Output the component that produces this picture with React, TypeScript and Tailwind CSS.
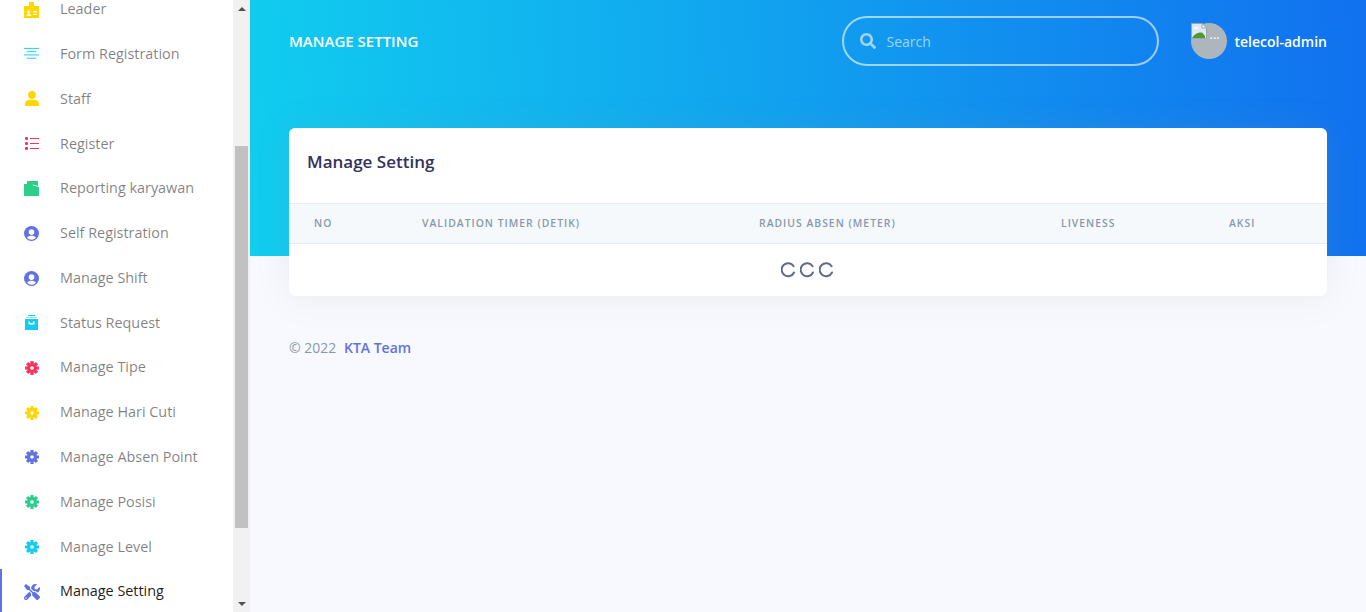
import type { ReactNode } from 'react';
import { FaSearch, FaTools } from 'react-icons/fa';

function GearIcon({ className }: { className: string }) {
  const teeth = [0, 45, 90, 135, 180, 225, 270, 315];
  return (
    <svg viewBox="0 0 14 14" className={`h-[14px] w-[14px] ${className}`} fill="currentColor">
      {teeth.map((deg) => (
        <rect key={deg} x="5.4" y="0" width="3.2" height="3" rx="0.3" transform={`rotate(${deg} 7 7)`} />
      ))}
      <path fillRule="evenodd" d="M7 1.900a5.100 5.100 0 1 0 0 10.200A5.100 5.100 0 0 0 7 1.900Zm0 3.300a1.800 1.800 0 1 1 0 3.600 1.800 1.800 0 0 1 0-3.600Z" />
    </svg>
  );
}

function CircleUserIcon() {
  return (
    <svg viewBox="0 0 16 16" className="h-[15px] w-[15px] text-[#5e72e4]">
      <circle cx="8" cy="8" r="8" fill="currentColor" />
      <circle cx="8" cy="6.5" r="3" fill="#fff" />
      <path d="M3.200 12.600C4.200 10.800 6 10.300 8 10.300s3.800.5 4.800 2.300A6.600 6.600 0 0 1 8 14.600a6.600 6.600 0 0 1-4.800-2Z" fill="#fff" />
    </svg>
  );
}

const menu: { label: string; icon: ReactNode; active?: boolean }[] = [
  {
    label: 'Leader',
    icon: (
      <svg viewBox="0 0 15 16" className="mt-px h-[16px] w-[15px] text-[#ffd600]" fill="currentColor">
        <rect x="5" y="0" width="5" height="5" />
        <path fillRule="evenodd" d="M0 4h15v12H0V4Zm4.800 4.500a1.500 1.500 0 1 0 0 3 1.500 1.500 0 0 0 0-3ZM2.300 14c0-1.200 1.100-2 2.500-2s2.500.8 2.500 2h-5Zm6.700-5h4v1.300H9V9Zm0 2.800h4v1.300H9v-1.300Z" />
      </svg>
    ),
  },
  {
    label: 'Form Registration',
    icon: (
      <svg viewBox="0 0 16 14" className="h-[14px] w-[15px] text-[#11cdef]" fill="currentColor">
        <rect x="0" y="0.500" width="16" height="1" />
        <rect x="3" y="4" width="10" height="1" />
        <rect x="0" y="7.500" width="16" height="1" />
        <rect x="3" y="11" width="10" height="1" />
      </svg>
    ),
  },
  {
    label: 'Staff',
    icon: (
      <svg viewBox="0 0 14 15" className="h-[15px] w-[14px] text-[#ffd600]" fill="currentColor">
        <circle cx="7" cy="4" r="3.900" />
        <path d="M0 15v-2c0-2.600 2.400-4.200 4.500-4.200h5C11.600 8.800 14 10.400 14 13v2H0Z" />
      </svg>
    ),
  },
  {
    label: 'Register',
    icon: (
      <svg viewBox="0 0 14 13" className="h-[13px] w-[14px] text-[#f5365c]" fill="currentColor">
        <rect x="0" y="0" width="3" height="3" rx="1" />
        <rect x="0" y="5" width="3" height="3" rx="1" />
        <rect x="0" y="10" width="3" height="3" rx="1" />
        <rect x="5" y="1" width="9" height="1" />
        <rect x="5" y="6" width="9" height="1" />
        <rect x="5" y="11" width="9" height="1" />
      </svg>
    ),
  },
  {
    label: 'Reporting karyawan',
    icon: (
      <svg viewBox="0 0 15 15" className="h-[15px] w-[15px] text-[#2dce89]" fill="currentColor">
        <path d="M3 0h11v5L9 3.600H3V0Z" />
        <path d="M0 3h8.500l1 1.600L15 6v9H0V3Z" />
      </svg>
    ),
  },
  { label: 'Self Registration', icon: <CircleUserIcon /> },
  { label: 'Manage Shift', icon: <CircleUserIcon /> },
  {
    label: 'Status Request',
    icon: (
      <svg viewBox="0 0 13 15" className="h-[15px] w-[13px] text-[#11cdef]" fill="currentColor">
        <rect x="3" y="0" width="7" height="1" />
        <rect x="1" y="2" width="11" height="1" opacity="0.5" />
        <path fillRule="evenodd" d="M0 4h13v11H0V4Zm3.500 2.500V9.500h6v-3H8v1.500H5V6.500H3.500Z" />
      </svg>
    ),
  },
  { label: 'Manage Tipe', icon: <GearIcon className="text-[#f5365c]" /> },
  { label: 'Manage Hari Cuti', icon: <GearIcon className="text-[#ffd600]" /> },
  { label: 'Manage Absen Point', icon: <GearIcon className="text-[#5e72e4]" /> },
  { label: 'Manage Posisi', icon: <GearIcon className="text-[#2dce89]" /> },
  { label: 'Manage Level', icon: <GearIcon className="text-[#11cdef]" /> },
  { label: 'Manage Setting', icon: <FaTools className="h-4 w-4 text-[#5e72e4]" />, active: true },
];

const columns = ['No', 'Validation Timer (Detik)', 'Radius Absen (Meter)', 'Liveness', 'Aksi'];

function Spinner() {
  return (
    <svg viewBox="0 0 14 16" className="h-4 w-[14px] text-[#5d6a92]" fill="none" stroke="currentColor" strokeWidth="2" strokeLinecap="round">
      <path d="M12.600 4.200A6.500 6.500 0 1 0 13 10.500" />
    </svg>
  );
}

export default function App() {
  return (
    <div className="flex h-[612px] overflow-hidden bg-[#f8f9fe] font-['Open_Sans',sans-serif] text-sm">
      <aside className="flex h-full w-[250px] shrink-0 overflow-hidden">
        <nav className="h-full w-[233px] overflow-hidden bg-white">
          <ul className="-mt-[13px]">
            {menu.map((item) => (
              <li
                key={item.label}
                className={`flex h-[44.8px] items-center border-l-2 text-[14.4px] ${item.active ? 'border-[#5e72e4] text-black/90' : 'border-transparent text-black/50'}`}
              >
                <span className="flex w-[58px] justify-center pl-px">{item.icon}</span>
                <span>{item.label}</span>
              </li>
            ))}
          </ul>
        </nav>
        <div className="flex h-full w-[17px] flex-col items-center bg-[#f1f1f1]">
          <div className="flex h-[17px] w-full items-center justify-center">
            <span className="h-0 w-0 border-x-4 border-b-4 border-x-transparent border-b-[#505050]" />
          </div>
          <div className="mt-[129px] h-[382px] w-[13px] bg-[#c1c1c1]" />
          <div className="mt-auto flex h-[17px] w-full items-center justify-center">
            <span className="h-0 w-0 border-x-4 border-t-4 border-x-transparent border-t-[#505050]" />
          </div>
        </div>
      </aside>

      <main className="min-w-0 flex-1">
        <header className="h-[256px] bg-[linear-gradient(87deg,#11cdef_0,#1171ef_100%)] px-[39px] pt-[16px]">
          <div className="flex h-[50px] items-center">
            <h1 className="pt-px text-[15px] font-semibold uppercase text-white">Manage Setting</h1>
            <div className="ml-auto flex h-[50px] w-[317px] items-center rounded-full border-2 border-white/60 pl-[16px]">
              <FaSearch className="h-4 w-4 text-white/60" />
              <span className="ml-[11px] pt-px text-white/60">Search</span>
            </div>
            <div className="ml-[32px] flex items-center">
              <span className="relative h-9 w-9 rounded-full bg-[#adb5bd]">
                <svg viewBox="0 0 16 16" className="absolute left-0 top-0 h-4 w-4">
                  <path d="M0.500 0.500H11L15.500 5V15.500H0.500Z" fill="#dfe8f5" stroke="#a0a6ad" />
                  <path d="M11 0.500V5H15.500Z" fill="#fff" stroke="#a0a6ad" />
                  <path d="M2 5.500c1-2 5-2 6 0Z" fill="#fff" />
                  <path d="M1 15C3 11 7 9 11 9.500L14 13V15Z" fill="#4e9a2e" />
                </svg>
                <span className="absolute left-[19px] top-[3px] text-[13px] leading-[16px] text-white">...</span>
              </span>
              <span className="ml-2 pt-px font-semibold text-white">telecol-admin</span>
            </div>
          </div>
        </header>

        <div className="-mt-[128px] px-[39px]">
          <section className="overflow-hidden rounded-md bg-white shadow-[0_0_32px_rgba(136,152,170,0.15)]">
            <h3 className="flex h-[75px] items-center px-[18px] pb-[6px] text-[17px] font-semibold text-[#32325d]">Manage Setting</h3>
            <div className="grid h-[41px] grid-cols-[108px_337px_302px_168px_1fr] items-center border-y border-[#e9ecef] bg-[#f6f9fc] pl-px">
              {columns.map((col) => (
                <span key={col} className="px-6 text-[10.4px] font-semibold uppercase tracking-[1px] text-[#8898aa]">
                  {col}
                </span>
              ))}
            </div>
            <div className="flex h-[52px] items-center justify-center gap-[5px] pr-[3px]">
              <Spinner />
              <Spinner />
              <Spinner />
            </div>
          </section>

          <footer className="mt-[42px] text-[#8898aa]">
            © 2022 <span className="ml-1 font-semibold text-[#5e72e4]">KTA Team</span>
          </footer>
        </div>
      </main>
    </div>
  );
}
